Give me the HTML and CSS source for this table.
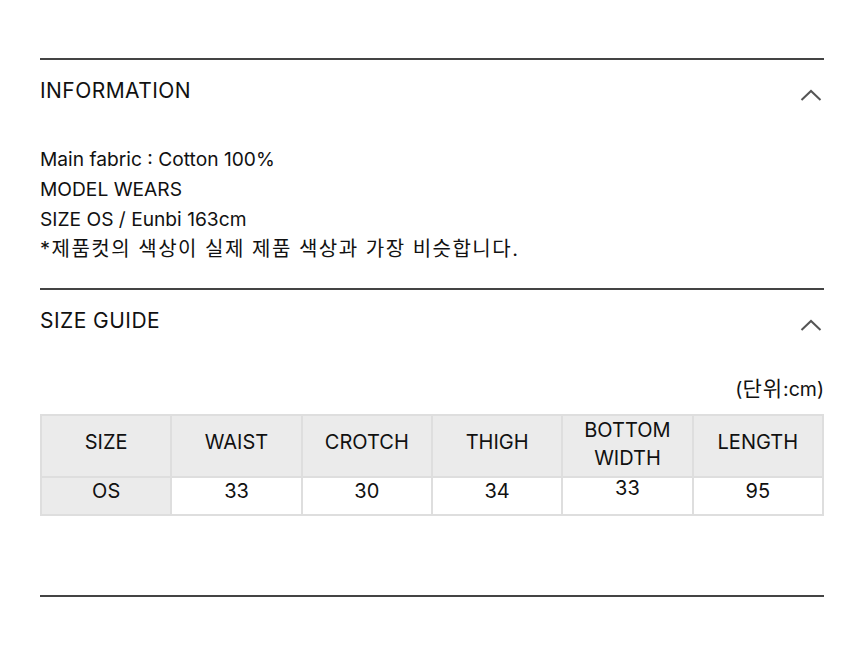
FILE: index.html
```html
<!DOCTYPE html>
<html lang="ko">
<head>
<meta charset="utf-8">
<link rel="stylesheet" href="styles.css">
</head>
<body>
<div class="wrap">
  <section class="section">
    <div class="sec-head">
      <h2 class="sec-title">INFORMATION</h2>
      <svg class="chev" width="22" height="12" viewBox="0 0 22 12"><path d="M1.5 11 L11 2 L20.5 11" fill="none" stroke="#555" stroke-width="2"/></svg>
    </div>
    <div class="sec-body info">
      <p>Main fabric : Cotton 100%</p>
      <p>MODEL WEARS</p>
      <p>SIZE OS / Eunbi 163cm</p>
      <p class="ko">*제품컷의 색상이 실제 제품 색상과 가장 비슷합니다.</p>
    </div>
  </section>
  <section class="section">
    <div class="sec-head">
      <h2 class="sec-title">SIZE GUIDE</h2>
      <svg class="chev" width="22" height="12" viewBox="0 0 22 12"><path d="M1.5 11 L11 2 L20.5 11" fill="none" stroke="#555" stroke-width="2"/></svg>
    </div>
    <div class="sec-body guide">
      <p class="unit">(<span class="ko-u">단위</span>:cm)</p>
      <table class="size-table">
        <thead>
          <tr class="head-row"><th>SIZE</th><th>WAIST</th><th>CROTCH</th><th>THIGH</th><th class="two">BOTTOM<br>WIDTH</th><th>LENGTH</th></tr>
        </thead>
        <tbody>
          <tr class="data-row"><td class="first">OS</td><td>33</td><td>30</td><td>34</td><td class="up">33</td><td>95</td></tr>
        </tbody>
      </table>
    </div>
  </section>
  <div class="end-line"></div>
</div>
</body>
</html>
```
FILE: styles.css
```css
html, body {
  margin: 0;
  padding: 0;
  background: #fff;
}
body {
  font-family: Inter, "Noto Sans CJK KR", sans-serif;
  color: #111;
}
.wrap {
  margin: 0 40px;
  padding-top: 58px;
}
.section {
  border-top: 2px solid #444;
}
.sec-head {
  height: 61px;
  padding-bottom: 1px;
  display: flex;
  align-items: center;
  justify-content: space-between;
}
.sec-title {
  margin: 0;
  font-size: 21px;
  font-weight: 400;
  letter-spacing: 0.45px;
}
.chev {
  margin-top: 9px;
  margin-right: 2px;
}
.sec-body.info {
  padding: 22px 0 24px;
  font-size: 19.2px;
  line-height: 30px;
}
.sec-body p {
  margin: 0;
}
.sec-body p.ko {
  font-size: 20px;
  letter-spacing: 1.5px;
}
.sec-body.guide {
  padding: 22px 0 79px;
}
.unit {
  text-align: right;
  font-size: 19.5px;
  line-height: 30px;
  margin-bottom: 10px !important;
}
.ko-u {
  font-size: 21px;
  letter-spacing: 1px;
}
.size-table {
  width: 100%;
  table-layout: fixed;
  border-collapse: collapse;
  font-size: 20px;
}
.size-table th, .size-table td {
  border: 2px solid #dedede;
  text-align: center;
  font-weight: 400;
  vertical-align: top;
}
.head-row {
  height: 62px;
}
.size-table th {
  background: #ebebeb;
  line-height: 28px;
  padding: 12px 0 0;
}
.size-table th.two {
  padding-top: 0;
}
.data-row {
  height: 38px;
}
.size-table td {
  line-height: 26px;
  padding: 0;
}
.size-table td.first {
  background: #ebebeb;
}
.size-table td.up {
  line-height: 20px;
}
.end-line {
  border-top: 2px solid #444;
}
```
